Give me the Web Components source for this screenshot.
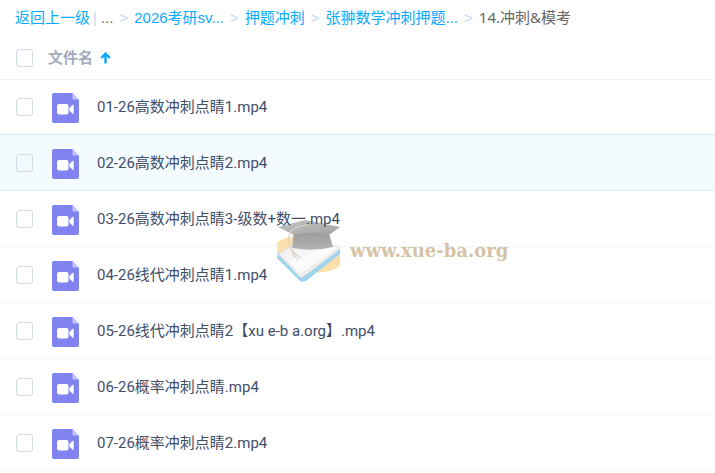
<!DOCTYPE html>
<html lang="zh-CN">
<head>
<meta charset="UTF-8">
<meta name="viewport" content="width=device-width, initial-scale=1.0">
<title>14.冲刺&amp;模考</title>
<style>
  body {
    margin: 0;
    background: #fff;
    color: #424e67;
    font-family: Roboto, "Noto Sans CJK SC", sans-serif;
    font-size: 15px;
    line-height: 20px;
  }
</style>
</head>
<body>
<file-browser>
  <path-bar slot="path">
    <path-item href="#back" back>返回上一级</path-item>
    <path-item>...</path-item>
    <path-item href="#2026">2026考研sv...</path-item>
    <path-item href="#yati">押题冲刺</path-item>
    <path-item href="#zhang">张翀数学冲刺押题...</path-item>
    <path-item current>14.冲刺&amp;模考</path-item>
  </path-bar>
  <list-header slot="head">文件名</list-header>
  <file-row>01-26高数冲刺点睛1.mp4</file-row>
  <file-row active>02-26高数冲刺点睛2.mp4</file-row>
  <file-row>03-26高数冲刺点睛3-级数+数一.mp4</file-row>
  <file-row>04-26线代冲刺点睛1.mp4</file-row>
  <file-row>05-26线代冲刺点睛2【xu e-b a.org】.mp4</file-row>
  <file-row>06-26概率冲刺点睛.mp4</file-row>
  <file-row>07-26概率冲刺点睛2.mp4</file-row>
  <site-watermark slot="mark">www.xue-ba.org</site-watermark>
</file-browser>

<script>
const checkboxStyle = `
  input {
    appearance: none;
    flex: none;
    box-sizing: border-box;
    width: 17px;
    height: 18px;
    margin: 0;
    border: 1px solid #d3dce6;
    border-radius: 3px;
    background: #fff;
    box-shadow: inset 0 0 1px #d3dce6;
  }
  input:checked {
    background: #09aaff;
    border-color: #09aaff;
  }
`;

class FileBrowser extends HTMLElement {
  connectedCallback() {
    this.attachShadow({ mode: 'open' });
    this.shadowRoot.innerHTML = `
      <style>
        :host {
          display: block;
          position: relative;
        }
        /* the first row shares its top line with the header */
        .rows {
          margin-top: -1px;
        }
      </style>
      <slot name="path"></slot>
      <slot name="head"></slot>
      <div class="rows" role="list"><slot></slot></div>
      <slot name="mark"></slot>
    `;
  }
}

class PathBar extends HTMLElement {
  connectedCallback() {
    this.attachShadow({ mode: 'open' });
    this.shadowRoot.innerHTML = `
      <style>
        nav {
          display: flex;
          align-items: baseline;
          box-sizing: border-box;
          height: 36px;
          padding: 7px 15px 0;
          white-space: nowrap;
          overflow: hidden;
        }
      </style>
      <nav aria-label="路径"><slot></slot></nav>
    `;
  }
}

class PathItem extends HTMLElement {
  connectedCallback() {
    const href = this.getAttribute('href');
    const text = href ? `<a href="${href}"><slot></slot></a>` : '<span><slot></slot></span>';
    let after = '<i>&gt;</i>';
    if (this.hasAttribute('back')) after = '<i class="bar">|</i>';
    if (this.hasAttribute('current')) after = '';
    this.attachShadow({ mode: 'open' });
    this.shadowRoot.innerHTML = `
      <style>
        :host {
          display: flex;
          color: #666;
          font-family: "Liberation Sans", "Noto Sans CJK SC", sans-serif;
        }
        :host([current]) {
          font-family: "Noto Sans", "Noto Sans CJK SC", sans-serif;
        }
        a {
          color: #09aaff;
          text-decoration: none;
        }
        i {
          margin: 0 6px;
          color: #c4d8f4;
          font-style: normal;
        }
        .bar {
          margin: 0 4px 0 3px;
        }
      </style>
      ${text}${after}
    `;
  }
}

class ListHeader extends HTMLElement {
  connectedCallback() {
    this.attachShadow({ mode: 'open' });
    this.shadowRoot.innerHTML = `
      <style>
        ${checkboxStyle}
        :host {
          display: flex;
          align-items: center;
          box-sizing: border-box;
          height: 44px;
          padding: 0 16px;
          border-bottom: 1px solid #f1f3f9;
        }
        button {
          display: flex;
          align-items: center;
          gap: 7px;
          margin: 0 0 0 15px;
          padding: 0;
          border: 0;
          background: none;
          color: #a2abbd;
          font: inherit;
          font-weight: 700;
        }
      </style>
      <input type="checkbox" aria-label="全选">
      <button type="button">
        <slot></slot>
        <svg width="11" height="12" viewBox="0 0 11 12" fill="none" stroke="#09aaff">
          <path d="M5.5 11.5V2M1.2 6 5.5 1.6 9.8 6" stroke-width="2.4"/>
        </svg>
      </button>
    `;
  }
}

class FileRow extends HTMLElement {
  connectedCallback() {
    this.setAttribute('role', 'listitem');
    this.attachShadow({ mode: 'open' });
    this.shadowRoot.innerHTML = `
      <style>
        ${checkboxStyle}
        :host {
          display: flex;
          align-items: center;
          box-sizing: border-box;
          height: 56px;
          padding: 0 16px;
          border-bottom: 1px solid #eef5fc;
        }
        :host([active]) {
          background: #f3fbff;
          border-color: #d4e9fb;
          box-shadow: 0 -1px #d4e9fb;
        }
        :host([active]) input {
          background: none;
        }
        svg {
          flex: none;
          margin: 2px 18px 0 19px;
        }
        /* names stay readable above the watermark */
        label {
          position: relative;
          z-index: 1;
        }
      </style>
      <input type="checkbox" id="pick">
      <svg width="27" height="30" viewBox="0 0 27 30">
        <path fill="#8183f1" d="M2 0H20.5L27 6.5V28a2 2 0 0 1-2 2H2a2 2 0 0 1-2-2V2a2 2 0 0 1 2-2z"/>
        <path fill="#c3c4fa" d="M20.5 0 27 6.5H22a1.5 1.5 0 0 1-1.5-1.5z"/>
        <rect fill="#fff" x="5" y="11" width="11.5" height="10.5" rx="2"/>
        <path fill="#fff" d="M17.3 15.2 20.4 12q1.3-.8 1.3.5v7.6q0 1.3-1.3.5l-3.1-3.2z"/>
      </svg>
      <label for="pick"><slot></slot></label>
    `;
  }
}

class SiteWatermark extends HTMLElement {
  connectedCallback() {
    this.attachShadow({ mode: 'open' });
    this.shadowRoot.innerHTML = `
      <style>
        :host {
          position: absolute;
          left: 276px;
          top: 218px;
          display: flex;
          align-items: center;
          gap: 9px;
          color: #d6c2a5;
          font-family: "DejaVu Serif", serif;
          font-size: 18px;
          font-weight: 700;
          pointer-events: none;
        }
      </style>
      <svg width="65" height="65" viewBox="0 0 65 65">
        <defs>
          <linearGradient id="cap" x1="0" y1="0" x2="1" y2="1">
            <stop offset="0" stop-color="#c4c4c4"/>
            <stop offset="1" stop-color="#a2a2a2"/>
          </linearGradient>
          <linearGradient id="band" x1="0" y1="0" x2="0" y2="1">
            <stop offset="0" stop-color="#999"/>
            <stop offset="1" stop-color="#b4b4b4"/>
          </linearGradient>
          <linearGradient id="page" x1="0" y1="0" x2="1" y2="1">
            <stop offset="0" stop-color="#e9e9e9"/>
            <stop offset=".5" stop-color="#fcfcfc"/>
            <stop offset="1" stop-color="#e8e8e8"/>
          </linearGradient>
        </defs>
        <path fill="#fddfab" d="M1 25Q6 20 15 19L50 24 64 32V48Q52 56 38 54L2 42z"/>
        <path fill="#9fd4ef" d="M2 35 1 40 25 64 30 63 64 36V31z"/>
        <path fill="url(#page)" stroke="#d2d2d2" stroke-width=".7" d="M2 36 20 25 61 28 64 31 27 59 24 59z"/>
        <path fill="none" stroke="#dcdcdc" stroke-width=".8" d="M3 37 25 57 63 30M25 60 62 33"/>
        <path fill="url(#band)" d="M18 13 52 12 57 29Q37 34 16 30z"/>
        <path fill="url(#cap)" d="M2 9 29 2 64 9 53 17Q38 12 18 17z"/>
        <path fill="none" stroke="#ddd5c4" stroke-width="1.2" d="M33 7Q17 8 14 15T15 32L25 40M15 32 22 42M15 31 18 39"/>
      </svg>
      <span><slot></slot></span>
    `;
  }
}

customElements.define('file-browser', FileBrowser);
customElements.define('path-bar', PathBar);
customElements.define('path-item', PathItem);
customElements.define('list-header', ListHeader);
customElements.define('file-row', FileRow);
customElements.define('site-watermark', SiteWatermark);
</script>
</body>
</html>
